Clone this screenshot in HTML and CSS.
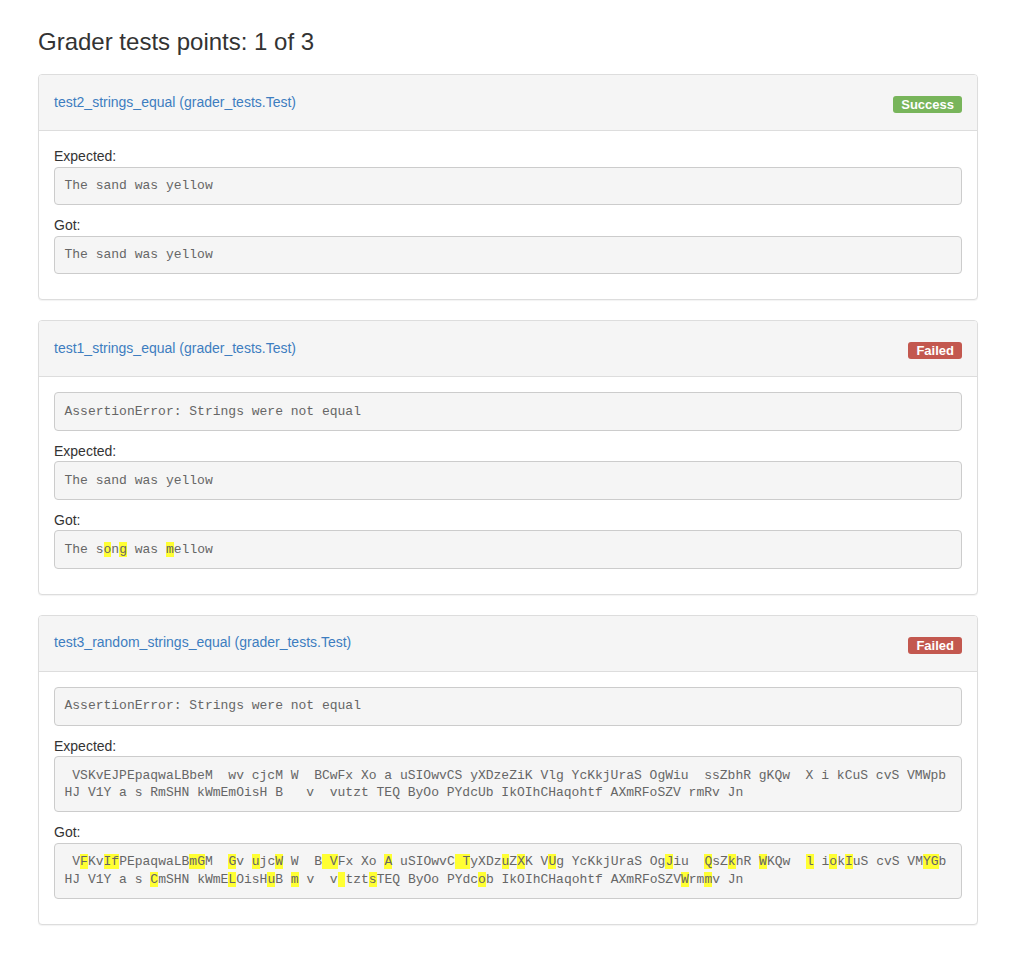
FILE: index.html
```html
<!DOCTYPE html>
<html>
<head>
<meta charset="utf-8">
<title>Grader tests</title>
<link rel="stylesheet" href="styles.css">
</head>
<body>
<div class="container">
  <h3 class="page-title">Grader tests points: 1 of 3</h3>

  <div class="panel">
    <div class="panel-heading">
      <a class="test-name">test2_strings_equal (grader_tests.Test)</a>
      <span class="badge badge-success">Success</span>
    </div>
    <div class="panel-body">
      <div class="field-label">Expected:</div>
      <pre class="code">The sand was yellow</pre>
      <div class="field-label">Got:</div>
      <pre class="code">The sand was yellow</pre>
    </div>
  </div>

  <div class="panel">
    <div class="panel-heading">
      <a class="test-name">test1_strings_equal (grader_tests.Test)</a>
      <span class="badge badge-failed">Failed</span>
    </div>
    <div class="panel-body">
      <pre class="code">AssertionError: Strings were not equal</pre>
      <div class="field-label">Expected:</div>
      <pre class="code">The sand was yellow</pre>
      <div class="field-label">Got:</div>
      <pre class="code">The s<span class="hl">o</span>n<span class="hl">g</span> was <span class="hl">m</span>ellow</pre>
    </div>
  </div>

  <div class="panel">
    <div class="panel-heading">
      <a class="test-name">test3_random_strings_equal (grader_tests.Test)</a>
      <span class="badge badge-failed">Failed</span>
    </div>
    <div class="panel-body">
      <pre class="code">AssertionError: Strings were not equal</pre>
      <div class="field-label">Expected:</div>
      <pre class="code"> VSKvEJPEpaqwaLBbeM  wv cjcM W  BCwFx Xo a uSIOwvCS yXDzeZiK Vlg YcKkjUraS OgWiu  ssZbhR gKQw  X i kCuS cvS VMWpb
HJ V1Y a s RmSHN kWmEmOisH B   v  vutzt TEQ ByOo PYdcUb IkOIhCHaqohtf AXmRFoSZV rmRv Jn</pre>
      <div class="field-label">Got:</div>
      <pre class="code"> V<span class="hl">F</span>Kv<span class="hl">If</span>PEpaqwaLB<span class="hl">mG</span>M  <span class="hl">G</span>v <span class="hl">u</span>jc<span class="hl">W</span> W  B<span class="hl"> V</span>Fx Xo <span class="hl">A</span> uSIOwvC<span class="hl"> T</span>yXDz<span class="hl">u</span>Z<span class="hl">X</span>K V<span class="hl">U</span>g YcKkjUraS Og<span class="hl">J</span>iu  <span class="hl">Q</span>sZ<span class="hl">k</span>hR <span class="hl">W</span>KQw  <span class="hl">l</span> i<span class="hl">o</span>k<span class="hl">I</span>uS cvS VM<span class="hl">YG</span>b
HJ V1Y a s <span class="hl">C</span>mSHN kWmE<span class="hl">L</span>OisH<span class="hl">u</span>B <span class="hl">m</span> v  v<span class="hl"> </span>tzt<span class="hl">s</span>TEQ ByOo PYdc<span class="hl">o</span>b IkOIhCHaqohtf AXmRFoSZV<span class="hl">W</span>rm<span class="hl">m</span>v Jn</pre>
    </div>
  </div>
</div>
</body>
</html>
```
FILE: styles.css
```css
* {
  box-sizing: border-box;
}

body {
  margin: 0;
  font-family: "Liberation Sans", Arial, sans-serif;
  font-size: 14px;
  line-height: 20px;
  color: #333;
  background: #fff;
}

.container {
  width: 940px;
  margin: 0 0 0 38px;
}

.page-title {
  margin: 29px 0 19px;
  font-size: 24px;
  font-weight: 500;
  line-height: 26px;
  color: #333;
}

.panel {
  border: 1px solid #ddd;
  border-radius: 4px;
  background: #fff;
  box-shadow: 0 1px 1px rgba(0, 0, 0, 0.05);
  margin-bottom: 20px;
}

.panel-heading {
  display: flex;
  align-items: center;
  justify-content: space-between;
  height: 56px;
  padding: 0 15px;
  background: #f5f5f5;
  border-bottom: 1px solid #ddd;
  border-radius: 3px 3px 0 0;
}

.test-name {
  color: #3d7dc0;
  font-size: 14px;
  text-decoration: none;
  margin-top: -2px;
}

.badge {
  display: inline-block;
  margin-top: 4px;
  padding: 0 8px;
  height: 17px;
  line-height: 17px;
  font-size: 13px;
  font-weight: bold;
  color: #fff;
  border-radius: 3px;
}

.badge-success {
  background: #78b55b;
}

.badge-failed {
  background: #c3584f;
}

.panel-body {
  padding: 15px;
}

.field-label {
  line-height: 20.5px;
}

.code {
  margin: 0 0 10px;
  padding: 9.5px;
  font-family: "Liberation Mono", "Courier New", monospace;
  font-size: 13px;
  line-height: 17.6px;
  color: #666;
  background: #f5f5f5;
  border: 1px solid #ccc;
  border-radius: 4px;
  white-space: pre;
  overflow: hidden;
}

.hl {
  background: #ffff33;
}
```
